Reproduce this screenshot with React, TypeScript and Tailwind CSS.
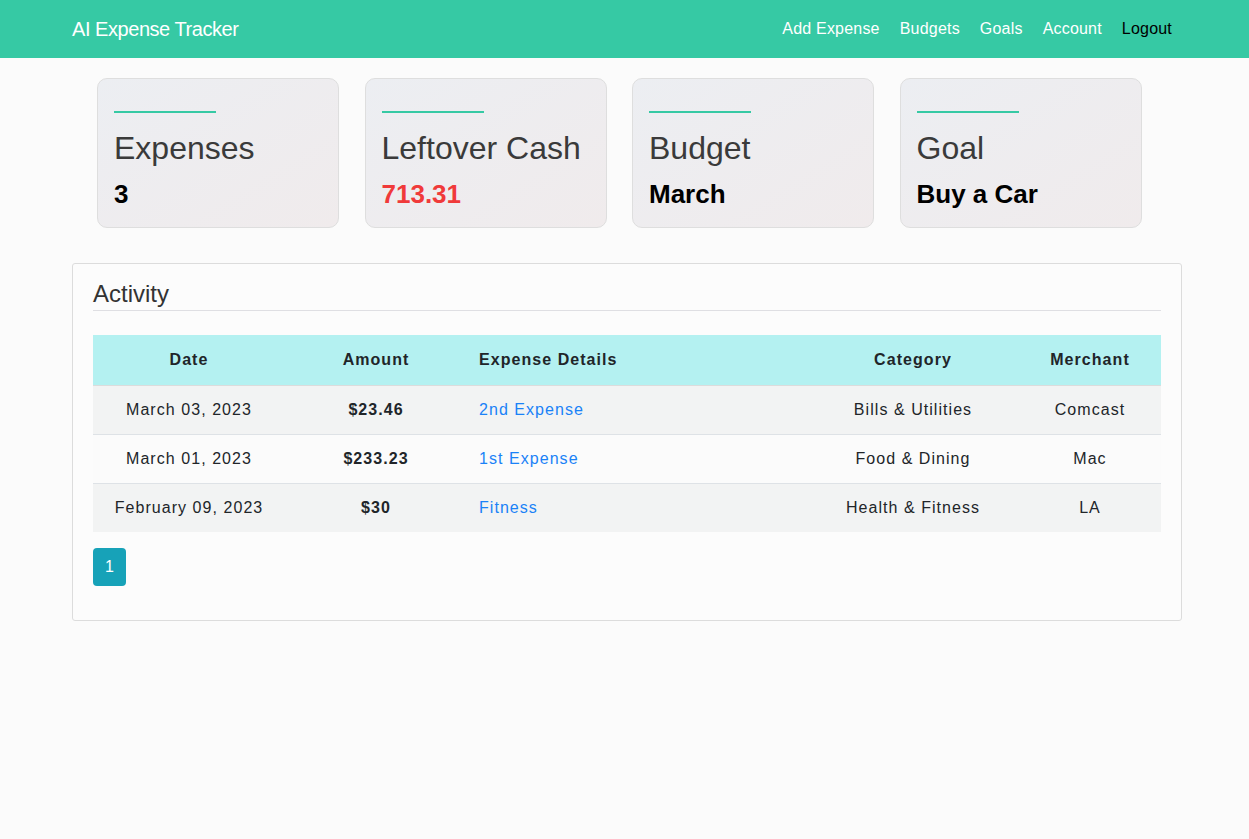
import React from "react";

const cards = [
  { title: "Expenses", value: "3", red: false },
  { title: "Leftover Cash", value: "713.31", red: true },
  { title: "Budget", value: "March", red: false },
  { title: "Goal", value: "Buy a Car", red: false },
];

const rows = [
  { date: "March 03, 2023", amount: "$23.46", details: "2nd Expense", category: "Bills & Utilities", merchant: "Comcast" },
  { date: "March 01, 2023", amount: "$233.23", details: "1st Expense", category: "Food & Dining", merchant: "Mac" },
  { date: "February 09, 2023", amount: "$30", details: "Fitness", category: "Health & Fitness", merchant: "LA" },
];

const App = () => {
  return (
    <div className="min-h-[839px] w-full bg-[#fbfbfb] font-['Liberation_Sans',Arial,sans-serif]">
      <nav className="h-[58px] bg-[#36c9a4] flex items-center justify-between pl-[72px] pr-[77px]">
        <a href="#" className="text-white text-[20px] tracking-[-0.45px]">AI Expense Tracker</a>
        <div className="flex gap-[20px] text-[16px] tracking-[0.2px]">
          <a href="#" className="text-white">Add Expense</a>
          <a href="#" className="text-white">Budgets</a>
          <a href="#" className="text-white">Goals</a>
          <a href="#" className="text-white">Account</a>
          <a href="#" className="text-black">Logout</a>
        </div>
      </nav>

      <div className="w-[1110px] ml-[72px]">
        <div className="flex gap-[25.5px] pl-[25px] pt-[20px]">
          {cards.map((c) => (
            <div
              key={c.title}
              className="w-[242px] h-[150px] rounded-[10px] border border-[#dedede] bg-gradient-to-br from-[#eceef2] to-[#f0ebec] px-[16px] pt-[32px]"
            >
              <div className="w-[102px] h-[2px] bg-[#36c9a4]" />
              <div className="mt-[16px] text-[32px] leading-[38px] text-[#3a3a3a]">{c.title}</div>
              <div className={`mt-[11px] text-[26px] leading-[32px] font-bold ${c.red ? "text-[#f03a3a]" : "text-black"}`}>
                {c.value}
              </div>
            </div>
          ))}
        </div>

        <div className="mt-[35px] h-[358px] rounded-[3px] border border-[#dcdcdc] bg-[#fcfcfc] px-[20px] pt-[16px]">
          <h2 className="text-[24px] leading-[28px] text-[#333] pb-[2px] border-b border-[#dfdfe3]">Activity</h2>
          <table className="mt-[24px] w-full border-collapse text-[16px] tracking-[1.05px] text-[#212529]">
            <thead>
              <tr className="bg-[#b4f1f1] h-[50px] border-b border-[#dcdcdc]">
                <th className="w-[192px] text-center font-bold">Date</th>
                <th className="w-[182px] text-center font-bold">Amount</th>
                <th className="w-[340px] text-left pl-[12px] font-bold">Expense Details</th>
                <th className="w-[212px] text-center font-bold">Category</th>
                <th className="w-[142px] text-center font-bold">Merchant</th>
              </tr>
            </thead>
            <tbody>
              {rows.map((r, i) => (
                <tr key={r.date} className={`h-[49px] ${i < rows.length - 1 ? "border-b border-[#dee2e6]" : ""} ${i % 2 === 0 ? "bg-[#f2f3f3]" : "bg-[#fbfbfb]"}`}>
                  <td className="text-center pt-[1px]">{r.date}</td>
                  <td className="text-center pt-[1px] font-bold">{r.amount}</td>
                  <td className="text-left pl-[12px] pt-[1px]">
                    <a href="#" className="text-[#1a82f7]">{r.details}</a>
                  </td>
                  <td className="text-center pt-[1px]">{r.category}</td>
                  <td className="text-center pt-[1px]">{r.merchant}</td>
                </tr>
              ))}
            </tbody>
          </table>
          <div className="mt-[16px] flex">
            <button className="w-[33px] h-[38px] rounded-[4px] bg-[#17a2b8] text-white text-[16px]">1</button>
          </div>
        </div>
      </div>
    </div>
  );
};

export default App;
